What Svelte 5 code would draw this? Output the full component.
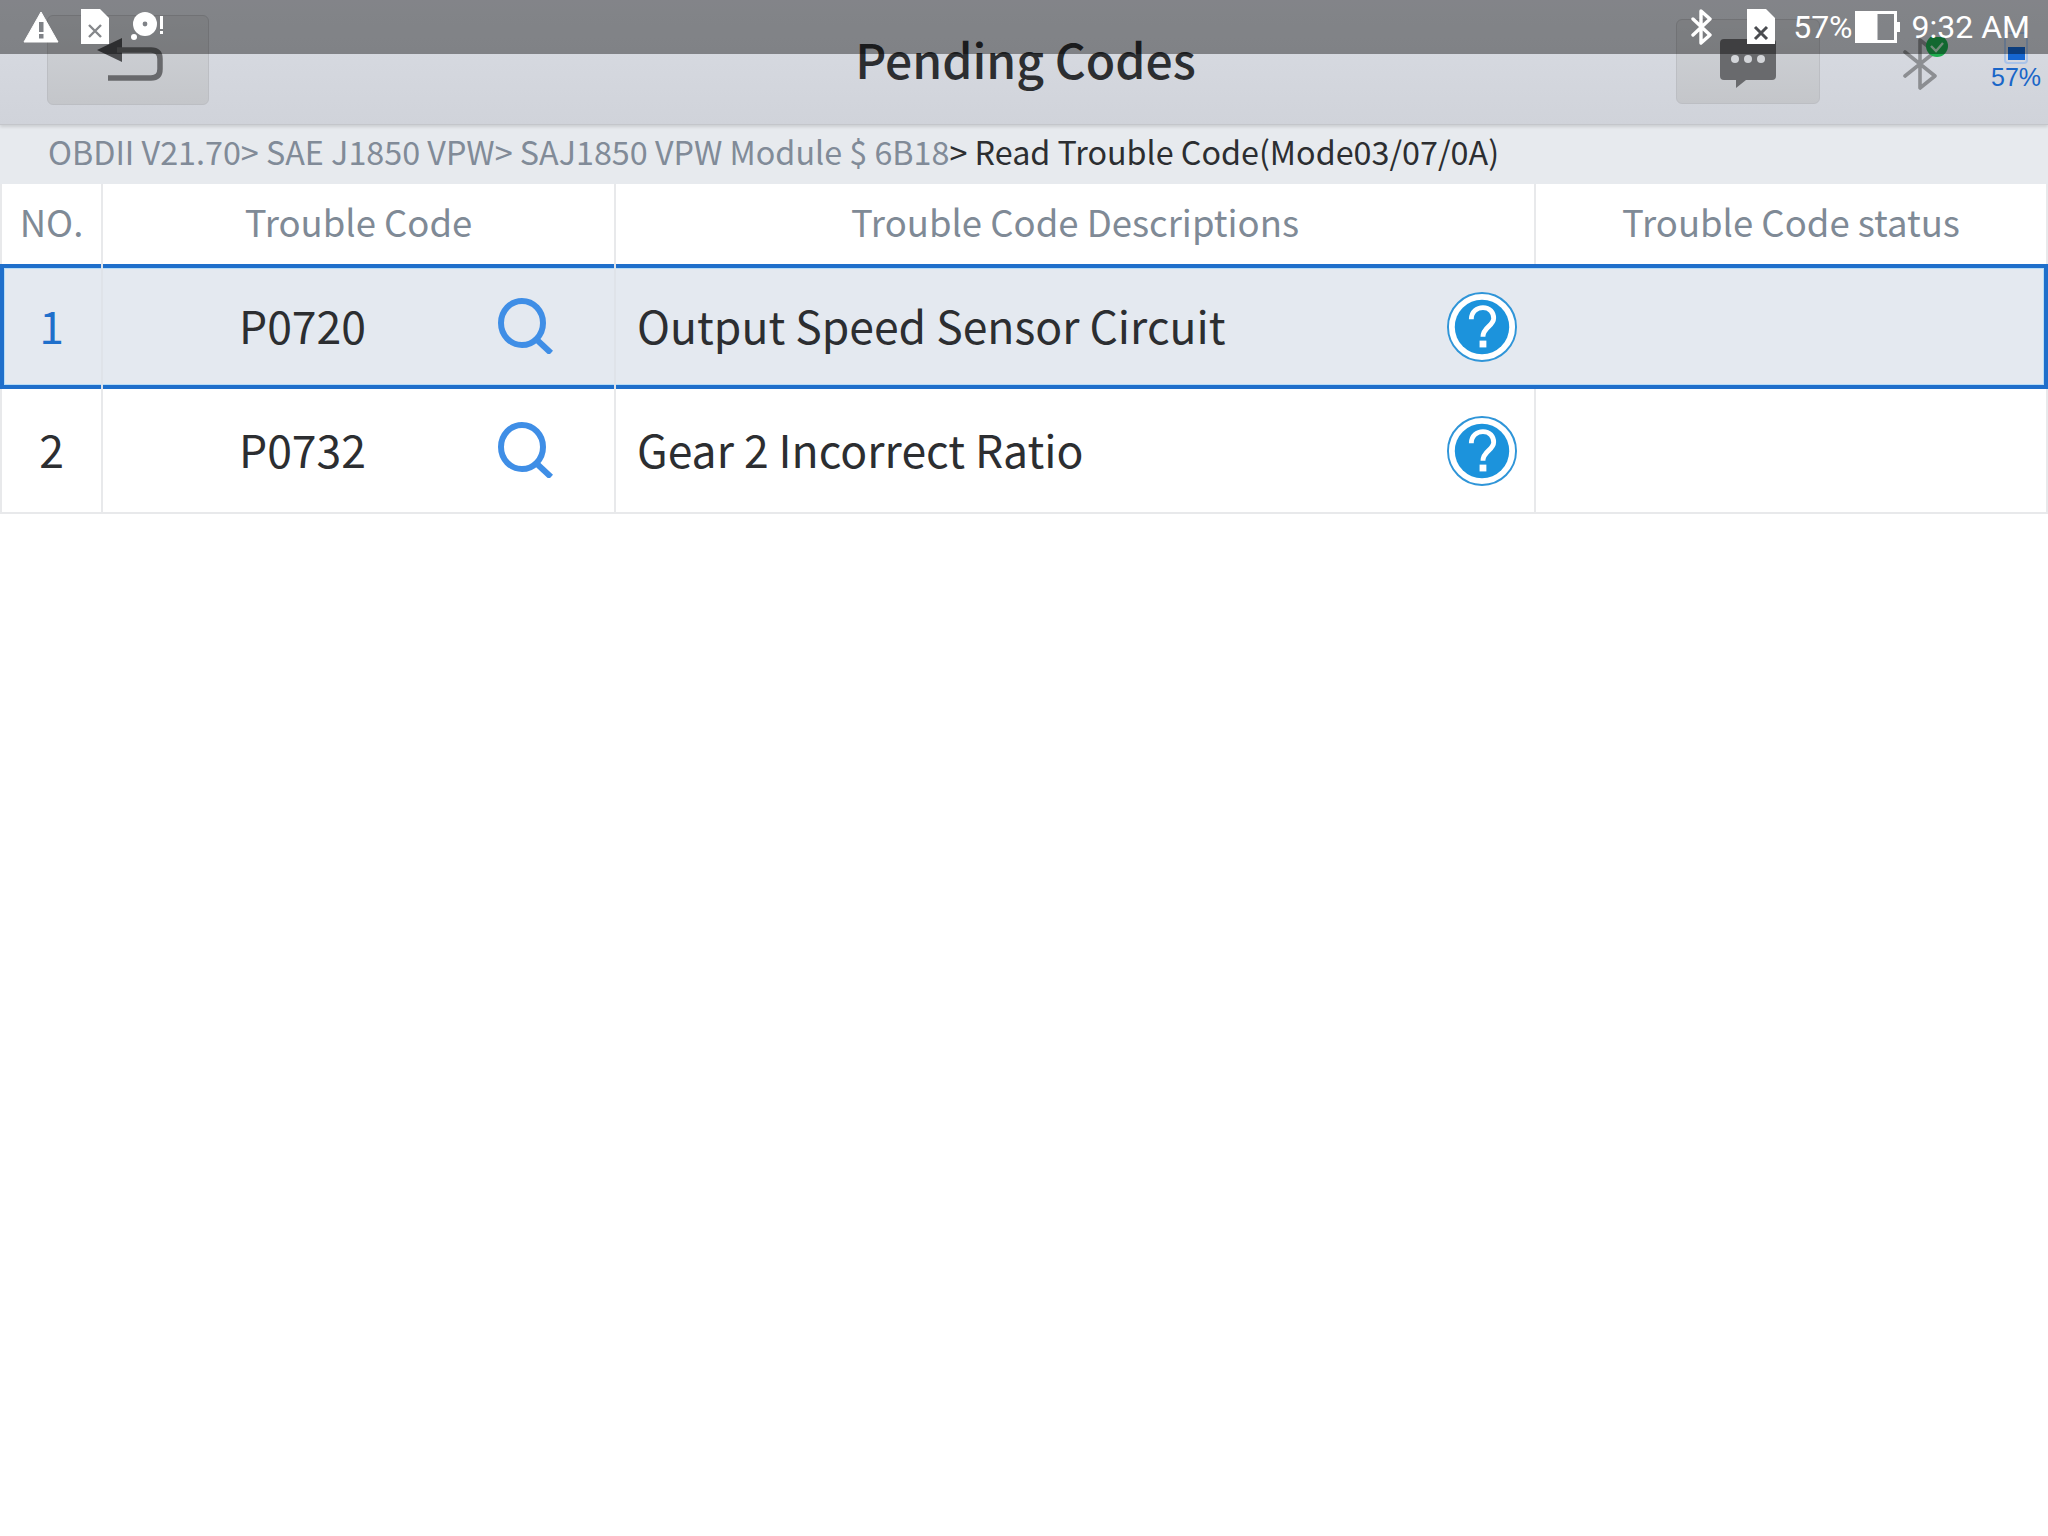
<script>
  const columns = ["NO.", "Trouble Code", "Trouble Code Descriptions", "Trouble Code status"];
  const rows = [
    { no: 1, code: "P0720", desc: "Output Speed Sensor Circuit", selected: true },
    { no: 2, code: "P0732", desc: "Gear 2 Incorrect Ratio", selected: false },
  ];
</script>

<div class="page">
  <!-- android status bar sits over the app header, translucent -->
  <div class="statusbar">
    <div class="status-left">
      <svg width="36" height="32" viewBox="0 0 36 32"><path d="M18 1 L35 31 H1 Z" fill="#fff" stroke="#fff" stroke-width="1" stroke-linejoin="round"/><rect x="16" y="11" width="4.5" height="10" fill="#7f8287"/><rect x="16" y="23" width="4.5" height="4.5" fill="#7f8287"/></svg>
      <svg width="28" height="36" viewBox="0 0 28 36"><path d="M0 0 H19 L28 9 V35 H0 Z" fill="#fff"/><path d="M8 16 L20 28 M20 16 L8 28" stroke="#85878b" stroke-width="2.4"/></svg>
      <svg class="disc" width="34" height="30" viewBox="0 0 34 30"><circle cx="14" cy="12" r="12" fill="#fff"/><circle cx="14" cy="12" r="2.4" fill="#7f8287"/><circle cx="3" cy="25" r="3" fill="#fff"/><rect x="29" y="4" width="3" height="13" fill="#fff"/><rect x="29" y="19" width="3" height="3" fill="#fff"/></svg>
    </div>
    <div class="status-right">
      <svg width="24" height="36" viewBox="0 0 24 36" fill="none"><path d="M3 10 L20 26 L11 34 V2 L20 10 L3 26" stroke="#fff" stroke-width="3.4" stroke-linejoin="round" stroke-linecap="round"/></svg>
      <svg class="doc" width="28" height="36" viewBox="0 0 28 36"><path d="M0 0 H19 L28 9 V35 H0 Z" fill="#fff"/><path d="M8 18 L20 30 M20 18 L8 30" stroke="#4a4c50" stroke-width="3"/></svg>
      <span class="pct">57%</span>
      <svg class="batt" width="46" height="32" viewBox="0 0 46 32"><rect x="1.5" y="1.5" width="39" height="29" fill="none" stroke="#fff" stroke-width="3"/><rect x="1.5" y="1.5" width="21" height="29" fill="#fff"/><rect x="41" y="11" width="4" height="10" fill="#fff"/></svg>
      <span class="time">9:32 AM</span>
    </div>
  </div>

  <header class="topbar">
    <button type="button" class="tool back" aria-label="Back">
      <svg width="66" height="48" viewBox="0 0 66 48" fill="none"><path d="M0 12 L25 0 V24 Z" fill="#4c4d50"/><path d="M20 12 H54 Q63 12 63 21 V31 Q63 40 54 40 H11" stroke="#68696c" stroke-width="5.5"/></svg>
    </button>
    <h1>Pending Codes</h1>
    <button type="button" class="tool msg" aria-label="Messages">
      <svg width="56" height="52" viewBox="0 0 56 52"><path d="M4 0 H52 Q56 0 56 4 V37 Q56 41 52 41 H26 L16 49 V41 H4 Q0 41 0 37 V4 Q0 0 4 0 Z" fill="#696a6d"/><circle cx="15" cy="20" r="4" fill="#d3d5d9"/><circle cx="28" cy="20" r="4" fill="#d3d5d9"/><circle cx="41" cy="20" r="4" fill="#d3d5d9"/></svg>
    </button>
    <div class="bt">
      <svg width="46" height="54" viewBox="0 0 46 54" fill="none"><path d="M2 15 L32 39 L17 51 V3 L32 15 L2 39" stroke="#8c8e92" stroke-width="3.6" stroke-linejoin="round" stroke-linecap="round"/><circle cx="34" cy="9" r="11" fill="#1fae50"/><path d="M28 9 L33 14 L40 6" stroke="#bfe8cb" stroke-width="2.4" fill="none"/></svg>
    </div>
    <div class="vci">
      <svg width="24" height="32" viewBox="0 0 24 32"><rect x="1" y="1" width="22" height="30" rx="3" fill="none" stroke="#a9c3e8" stroke-width="2"/><rect x="4" y="15" width="17" height="13" fill="#1566d1"/></svg>
      <span>57%</span>
    </div>
  </header>

  <div class="crumbs">
    <span class="trail">OBDII V21.70&gt; SAE J1850 VPW&gt; SAJ1850 VPW Module $ 6B18</span><span class="here">&gt; Read Trouble Code(Mode03/07/0A)</span>
  </div>

  <div class="table">
    <div class="row head">
      {#each columns as c}
        <div class="cell"><span class="label">{c}</span></div>
      {/each}
    </div>
    {#each rows as r (r.no)}
      <div class="row body" class:selected={r.selected}>
        <div class="cell no"><span class="label">{r.no}</span></div>
        <div class="cell code">
          <span class="label code-text">{r.code}</span>
          <svg class="search" width="56" height="56" viewBox="0 0 56 56" fill="none"><ellipse cx="25" cy="25" rx="21" ry="22" stroke="#3f8ee6" stroke-width="6"/><path d="M39 41 L54 55" stroke="#3f8ee6" stroke-width="6"/></svg>
        </div>
        <div class="cell desc">
          <span class="label">{r.desc}</span>
          <svg class="help" width="70" height="70" viewBox="0 0 72 72"><circle cx="36" cy="36" r="35" fill="#fff" stroke="#2f95d8" stroke-width="2"/><circle cx="36" cy="36" r="28" fill="#1c93dc"/><path d="M25 28 C25 20 31 16 37 16 C44 16 48 21 48 27 C48 35 37 36 37 46" fill="none" stroke="#fff" stroke-width="5"/><rect x="33.5" y="50" width="7" height="7" fill="#fff"/></svg>
        </div>
        <div class="cell status"></div>
      </div>
    {/each}
  </div>
</div>

<style>
  :global(body) {
    margin: 0;
    background: #fff;
  }

  .page {
    position: relative;
    width: 2048px;
    height: 1536px;
    background: #fff;
    font-family: "Noto Sans CJK SC", "Noto Sans", sans-serif;
    overflow: hidden;
  }

  .statusbar {
    position: absolute;
    top: 0;
    left: 0;
    right: 0;
    height: 54px;
    z-index: 2;
    background: rgba(0, 0, 0, 0.4);
    display: flex;
    justify-content: space-between;
    align-items: center;
    padding: 0 18px 0 23px;
    color: #fff;
    font-family: Roboto, sans-serif;
  }
  .status-left,
  .status-right {
    display: flex;
    align-items: center;
  }
  .status-left {
    gap: 22px;
  }
  .status-right {
    gap: 6px;
  }
  .doc {
    margin-left: 27px;
    margin-right: 12px;
  }
  .pct,
  .time {
    font-size: 32px;
    white-space: nowrap;
  }
  .batt {
    margin-left: -4px;
  }
  .time {
    margin-left: 5px;
  }

  .topbar {
    height: 125px;
    box-sizing: border-box;
    background: linear-gradient(#dadde4, #d0d3da);
    border-bottom: 1px solid #c4c6cb;
    box-shadow: 0 2px 3px rgba(0, 0, 0, 0.12);
    display: flex;
    align-items: center;
    position: relative;
    padding-left: 47px;
  }
  .topbar h1 {
    margin: 0 0 9px;
    flex: none;
    box-sizing: border-box;
    width: 1467px;
    padding-left: 166px;
    text-align: center;
    font-size: 48px;
    font-weight: 500;
    color: #2c2e31;
  }
  .tool {
    box-sizing: border-box;
    background: linear-gradient(#d0d3d8, #c4c6ca);
    border: 1px solid #bcbec3;
    border-radius: 6px;
    padding: 0;
    display: flex;
    justify-content: center;
    flex: none;
  }
  .back {
    width: 162px;
    height: 90px;
    margin: -5px 0 0;
    padding: 22px 0 0 4px;
  }
  .msg {
    width: 144px;
    height: 85px;
    margin: -2px 0 0;
    padding-top: 19px;
  }
  .bt {
    margin: 4px 0 0 83px;
    width: 46px;
    height: 54px;
  }
  .vci {
    margin: -2px 0 0 42px;
    display: flex;
    flex-direction: column;
    align-items: center;
    color: #1a66c8;
    font-family: "Liberation Sans", sans-serif;
    font-size: 25px;
    line-height: 26px;
  }

  .crumbs {
    box-sizing: border-box;
    height: 59px;
    background: #e7eaee;
    padding: 0 0 8px 48px;
    display: flex;
    align-items: center;
    font-size: 32.3px;
    white-space: nowrap;
  }
  .trail {
    color: #818b98;
  }
  .here {
    color: #2c2e31;
  }

  .row {
    display: grid;
    grid-template-columns: 101px 513px 920px 1fr;
  }
  .cell {
    box-sizing: border-box;
    border-left: 2px solid #e8e9eb;
    display: flex;
    align-items: center;
    justify-content: center;
    min-width: 0;
  }
  .cell:last-child {
    border-right: 2px solid #e8e9eb;
  }
  .head {
    height: 80px;
    color: #7f8a96;
    font-size: 36.5px;
  }
  .head .label {
    padding-bottom: 5px;
  }
  .body {
    height: 125px;
    font-size: 44.5px;
    color: #2c2e31;
    border-bottom: 2px solid #e8e9eb;
    box-sizing: border-box;
    position: relative;
  }
  .body .label {
    padding-bottom: 5px;
  }
  .body.selected {
    background: #e4e9f0;
    box-shadow:
      inset 0 0 0 4px #1f6fcb,
      inset 0 0 0 5px #b5dcf7;
    border-bottom: none;
  }
  .selected .cell {
    border-left-color: #dfe3e9;
  }
  .selected .cell:first-child,
  .selected .cell:last-child {
    border-color: transparent;
  }
  .selected .no {
    color: #1f6fcb;
  }
  .code {
    justify-content: flex-start;
    padding-left: 136px;
  }
  .code-text {
    width: 258px;
    flex: none;
  }
  .search {
    flex: none;
    margin-top: -2px;
  }
  .desc {
    justify-content: space-between;
    padding: 0 17px 0 21px;
  }
</style>
